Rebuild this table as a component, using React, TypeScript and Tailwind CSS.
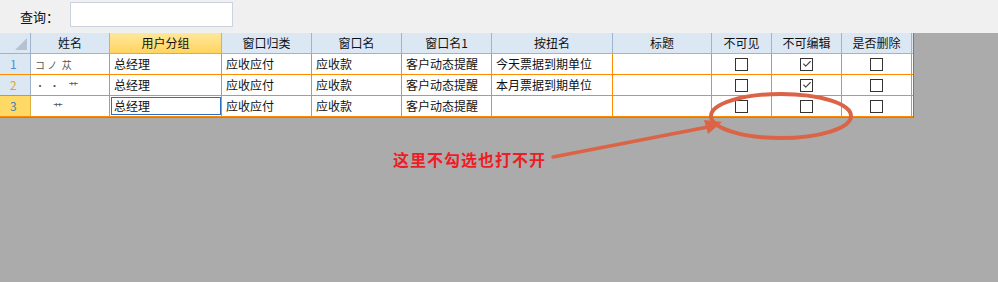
import { Check } from "lucide-react";

const cols = [
  { key: "name", title: "姓名", w: "w-[79px]" },
  { key: "group", title: "用户分组", w: "w-[112px]" },
  { key: "cat", title: "窗口归类", w: "w-[90px]" },
  { key: "win", title: "窗口名", w: "w-[90px]" },
  { key: "win1", title: "窗口名1", w: "w-[90px]" },
  { key: "btn", title: "按扭名", w: "w-[121px]" },
  { key: "title", title: "标题", w: "w-[99px]" },
  { key: "hide", title: "不可见", w: "w-[60px]" },
  { key: "lock", title: "不可编辑", w: "w-[70px]" },
  { key: "del", title: "是否删除", w: "w-[70px]" },
];

const rows = [
  { num: "1", numColor: "text-[#4a8fd6]", name: "コ ノ  苁", group: "总经理", cat: "应收应付", win: "应收款", win1: "客户动态提醒", btn: "今天票据到期单位", title: "", hide: false, lock: true, del: false },
  { num: "2", numColor: "text-[#f0a02a]", name: "·  ·    艹", group: "总经理", cat: "应收应付", win: "应收款", win1: "客户动态提醒", btn: "本月票据到期单位", title: "", hide: false, lock: true, del: false },
  { num: "3", numColor: "text-[#4a7fb8]", name: "        艹", group: "总经理", cat: "应收应付", win: "应收款", win1: "客户动态提醒", btn: "", title: "", hide: false, lock: false, del: false },
];

function Box({ checked }: { checked: boolean }) {
  return (
    <div className="w-[13px] h-[13px] border border-[#333] bg-white flex items-center justify-center">
      {checked && <Check size={10} strokeWidth={2.6} className="text-[#444]" />}
    </div>
  );
}

export default function App() {
  return (
    <div
      className="relative w-[998px] h-[282px] bg-[#ababab] overflow-hidden text-[12px] text-[#111]"
      style={{ fontFamily: '"Noto Sans CJK SC", "Noto Sans", sans-serif' }}
    >
      {/* search bar */}
      <div className="h-[33px] bg-[#f0f0f0] flex items-start">
        <div className="pl-[20px] pt-[7px] w-[70px] text-[13px]">查询：</div>
        <div className="mt-[2px] w-[163px] h-[25px] bg-white border border-[#c9d4e0]" />
      </div>

      {/* grid */}
      <div className="w-[914px] border-r border-[#7a7a7a] border-b border-b-[#8a8a8a]">
        <div className="flex h-[21px] bg-[#dce7f4] border-b border-[#9fb4cc]">
          <div className="w-[31px] h-full border-r border-[#9fb4cc] relative">
            <div className="absolute right-[3px] bottom-[3px] w-0 h-0 border-l-[12px] border-l-transparent border-b-[12px] border-b-[#b4c2d2]" />
          </div>
          {cols.map((c) => (
            <div
              key={c.key}
              className={`${c.w} h-full flex items-center justify-center border-r ${
                c.key === "group"
                  ? "bg-gradient-to-b from-[#ffe89a] to-[#ffd45e] border-[#e0b040]"
                  : "border-[#9fb4cc]"
              }`}
            >
              {c.title}
            </div>
          ))}
          <div className="w-px" />
        </div>
        {rows.map((r, i) => (
          <div key={r.num} className="flex h-[21px] bg-white border-b border-[#ff8c00]">
            <div
              className={`w-[31px] h-full border-r flex items-center pl-[10px] ${r.numColor} ${
                i === 2 ? "bg-[#ffd966] border-[#e0b040]" : "bg-[#dce7f4] border-[#9fb4cc]"
              }`}
            >
              {r.num}
            </div>
            {cols.map((c) => {
              const v = (r as Record<string, unknown>)[c.key];
              const sel = i === 2 && c.key === "group";
              return (
                <div
                  key={c.key}
                  className={`${c.w} h-full border-r border-[#ff8c00] flex items-center ${
                    typeof v === "boolean" ? "justify-center" : "pl-[4px]"
                  } ${sel ? "outline outline-1 -outline-offset-2 outline-[#2a6fc2]" : ""} ${
                    c.key === "name" ? "text-[#555] text-[10px] whitespace-pre" : ""
                  }`}
                >
                  {typeof v === "boolean" ? <Box checked={v} /> : (v as string)}
                </div>
              );
            })}
          </div>
        ))}
      </div>

      {/* annotation */}
      <div className="absolute left-[393px] top-[147px] text-[16px] font-bold text-[#ee1c25] tracking-[1px]">
        这里不勾选也打不开
      </div>
      <svg className="absolute left-0 top-0" width="998" height="282">
        <ellipse cx="781" cy="116" rx="70" ry="22" fill="none" stroke="#dc6446" strokeWidth="4" />
        <line x1="553" y1="157" x2="708" y2="127" stroke="#dc6446" strokeWidth="3.5" strokeLinecap="round" />
        <polygon points="722,122 704,120 708,134" fill="#dc6446" />
      </svg>
    </div>
  );
}
